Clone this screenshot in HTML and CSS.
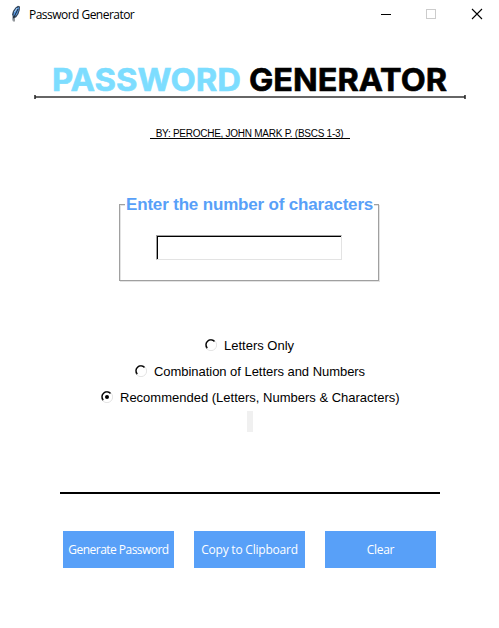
FILE: index.html
```html
<!DOCTYPE html>
<html lang="en">
<head>
<meta charset="utf-8">
<title>Password Generator</title>
<link rel="stylesheet" href="styles.css">
</head>
<body>
<header class="titlebar">
  <svg class="feather" width="12" height="18" viewBox="0 0 12 18">
    <path d="M2.600 16.500V11L2 9.500 3 6 5.500 2.500 8 .8 10 1.500 9.800 5 8.500 9 6 12.500 3.500 13Z" fill="#34465c"/>
    <path d="M3.500 10.500 4 7 6.500 3.500 9 2 8.500 5.500 7 9.500 4.500 11.500Z" fill="#5a9be4"/>
    <path d="M4.500 7 7 3" stroke="#a9cbea" fill="none"/>
    <path d="M4 16.500V12L8 4" stroke="#101820" stroke-width=".9" fill="none"/>
  </svg>
  <span class="caption">Password Generator</span>
  <svg class="controls" width="104" height="12" viewBox="0 0 104 12" shape-rendering="crispEdges">
    <path d="M1 6.500H11" stroke="#000"/>
    <rect x="46.500" y="1.500" width="9" height="9" fill="none" stroke="#ccc"/>
    <path d="M92 1 102 11M102 1 92 11" stroke="#000" stroke-width="1.1" shape-rendering="auto"/>
  </svg>
</header>
<main>
  <svg class="logo" width="432" height="40" viewBox="0 0 432 40" role="img">
    <text class="logo-text cyan" x="18" y="31" textLength="189" lengthAdjust="spacingAndGlyphs">PASSWORD</text>
    <text class="logo-text" x="215" y="31" textLength="198" lengthAdjust="spacingAndGlyphs">GENERATOR</text>
    <path d="M1 37H431" stroke="#666" stroke-width="2"/>
    <path d="M1 35V39M431 35V39" stroke="#222" stroke-width="1.500"/>
  </svg>
  <p class="byline"><span>BY: PEROCHE, JOHN MARK P. (BSCS 1-3)</span></p>
  <fieldset class="group">
    <legend>Enter the number of characters</legend>
    <input class="entry" type="text">
  </fieldset>
  <div class="options">
    <label class="option o1"><svg class="dot" width="12" height="12" viewBox="0 0 12 12"><path d="M2 10A5.500 5.500 0 0 1 10 2" stroke="#aaa" fill="none"/><path d="M2.300 9A4.700 4.700 0 0 1 9.500 2.500" stroke="#000" stroke-width="1.300" fill="none"/><path d="M10 2A5.500 5.500 0 0 1 2 10" stroke="#e4e4e4" fill="none"/></svg><span>Letters Only</span></label>
    <label class="option o2"><svg class="dot" width="12" height="12" viewBox="0 0 12 12"><path d="M2 10A5.500 5.500 0 0 1 10 2" stroke="#aaa" fill="none"/><path d="M2.300 9A4.700 4.700 0 0 1 9.500 2.500" stroke="#000" stroke-width="1.300" fill="none"/><path d="M10 2A5.500 5.500 0 0 1 2 10" stroke="#e4e4e4" fill="none"/></svg><span>Combination of Letters and Numbers</span></label>
    <label class="option o3"><svg class="dot" width="12" height="12" viewBox="0 0 12 12"><path d="M2 10A5.500 5.500 0 0 1 10 2" stroke="#aaa" fill="none"/><path d="M2.300 9A4.700 4.700 0 0 1 9.500 2.500" stroke="#000" stroke-width="1.300" fill="none"/><path d="M10 2A5.500 5.500 0 0 1 2 10" stroke="#e4e4e4" fill="none"/><circle cx="6" cy="6" r="2" fill="#000"/></svg><span>Recommended (Letters, Numbers &amp; Characters)</span></label>
  </div>
  <div class="result"></div>
  <div class="rule"></div>
  <div class="buttons">
    <button class="b1">Generate Password</button>
    <button class="b2">Copy to Clipboard</button>
    <button class="b3">Clear</button>
  </div>
</main>
</body>
</html>
```
FILE: styles.css
```css
* { box-sizing: border-box; }
body { margin: 0; width: 499px; height: 628px; background: #fff; color: #000; font-family: "Liberation Sans", Arial, sans-serif; overflow: hidden; }
.titlebar { display: flex; align-items: center; height: 30px; padding-left: 10px; }
.feather { margin-top: -2px; }
.caption { margin-left: 7px; font: 12px/16px "Open Sans", sans-serif; letter-spacing: -0.53px; white-space: nowrap; }
.controls { margin-left: auto; margin-right: 15px; margin-top: -2px; }
main { display: flex; flex-direction: column; align-items: center; }
.logo { display: block; margin-top: 30px; }
.logo-text { font: 700 31px Inter, sans-serif; fill: #000; stroke: #000; stroke-width: 0.6px; }
.cyan { fill: #7dddff; stroke: #7dddff; }
.byline { width: 200px; height: 12px; margin: 27px 0 0; border-bottom: 1px solid #000; font-size: 10px; line-height: 13px; text-align: center; letter-spacing: -0.26px; white-space: nowrap; }
.group { width: 260px; height: 85px; margin: 57px 0 0 -1px; padding: 0; border: 1px solid #a0a0a0; box-shadow: 1px 1px #e3e3e3, inset 1px 1px #e3e3e3; display: block; }
.group legend { height: 16px; margin-left: 5px; padding: 0 1px; background: #fff; color: #58a0f8; font-size: 17px; font-weight: 700; line-height: 18px; letter-spacing: -0.17px; white-space: nowrap; }
.entry { display: block; width: 186px; height: 25px; margin: 23px 0 0 36px; padding: 2px; border: 1px solid; border-color: #a0a0a0 #e3e3e3 #e3e3e3 #a0a0a0; box-shadow: inset 1px 1px #000; background: #fff; }
.options { width: 100%; margin-top: 51px; }
.option { display: flex; align-items: center; height: 26px; font-size: 13px; white-space: nowrap; }
.dot { margin-right: 7px; }
.o1 { padding-left: 205px; }
.o2 { padding-left: 135px; letter-spacing: -0.04px; }
.o3 { padding-left: 101px; }
.result { width: 6px; height: 21px; margin-top: 1px; background: #f0f0f0; }
.rule { width: 380px; height: 2px; margin-top: 60px; background: #000; }
.buttons { display: flex; gap: 20px; margin-top: 37px; }
.buttons button { width: 111px; height: 37px; padding: 0; border: 0; background: #58a0f8; color: #fff; font: 12px "Open Sans", sans-serif; letter-spacing: -0.53px; white-space: nowrap; }
.buttons .b2 { letter-spacing: -0.22px; }
.buttons .b3 { letter-spacing: -0.3px; }
```
